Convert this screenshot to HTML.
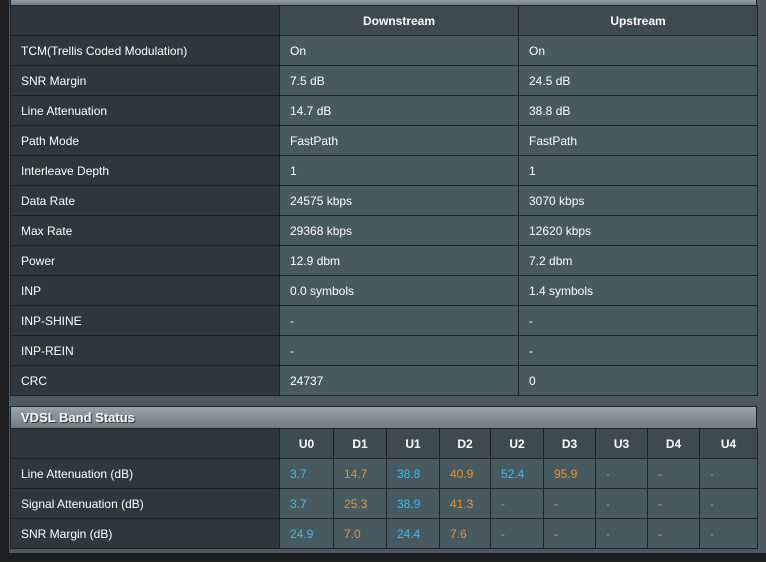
<!DOCTYPE html><html><head><style>
body{margin:0;width:766px;height:562px;background:#4d595e;font-family:"Liberation Sans",sans-serif;font-size:12px;color:#fff;position:relative;overflow:hidden}
.lstrip{position:absolute;left:0;top:0;width:9px;height:562px;background:#1c1f20}
.bstrip{position:absolute;left:0;top:553px;width:766px;height:9px;background:#1c1f20}
table{position:absolute;left:10px;border-collapse:collapse;table-layout:fixed}
td,th{border:1px solid #1e2326;height:29px;padding:0 0 0 10px;text-align:left;font-weight:normal}
th{background:#3c4b50;font-weight:bold;text-align:center;padding:0}
td.l{background:#2e383c}
th.l{background:#2e383c}
td{background:#475a60}
.bar{position:absolute;left:10px;width:747px;background:linear-gradient(#98a4ab,#6f7c82);border:1px solid #1e2326;box-sizing:border-box}
.b{color:#3fb6ee}.o{color:#f08d26}
</style></head><body>
<div class="lstrip"></div>
<div class="bar" style="top:-2px;height:8px"></div>
<table style="top:5px;width:748px">
<colgroup><col style="width:269px"><col style="width:239px"><col style="width:239px"></colgroup>
<tr><th class="l"></th><th>Downstream</th><th>Upstream</th></tr>
<tr><td class="l">TCM(Trellis Coded Modulation)</td><td>On</td><td>On</td></tr>
<tr><td class="l">SNR Margin</td><td>7.5 dB</td><td>24.5 dB</td></tr>
<tr><td class="l">Line Attenuation</td><td>14.7 dB</td><td>38.8 dB</td></tr>
<tr><td class="l">Path Mode</td><td>FastPath</td><td>FastPath</td></tr>
<tr><td class="l">Interleave Depth</td><td>1</td><td>1</td></tr>
<tr><td class="l">Data Rate</td><td>24575 kbps</td><td>3070 kbps</td></tr>
<tr><td class="l">Max Rate</td><td>29368 kbps</td><td>12620 kbps</td></tr>
<tr><td class="l">Power</td><td>12.9 dbm</td><td>7.2 dbm</td></tr>
<tr><td class="l">INP</td><td>0.0 symbols</td><td>1.4 symbols</td></tr>
<tr><td class="l">INP-SHINE</td><td>-</td><td>-</td></tr>
<tr><td class="l">INP-REIN</td><td>-</td><td>-</td></tr>
<tr><td class="l">CRC</td><td>24737</td><td>0</td></tr>
</table>
<div class="bar" style="top:406px;height:23px;font-weight:bold;font-size:13px;padding:3px 0 0 10px;text-shadow:1px 1px 0 #333">VDSL Band Status</div>
<table style="top:428px;width:748px">
<colgroup><col style="width:269px"><col style="width:54px"><col style="width:53px"><col style="width:53px"><col style="width:51px"><col style="width:53px"><col style="width:52px"><col style="width:52px"><col style="width:52px"><col style="width:58px"></colgroup>
<tr><th class="l"></th><th>U0</th><th>D1</th><th>U1</th><th>D2</th><th>U2</th><th>D3</th><th>U3</th><th>D4</th><th>U4</th></tr>
<tr><td class="l">Line Attenuation (dB)</td><td class="b">3.7</td><td class="o">14.7</td><td class="b">38.8</td><td class="o">40.9</td><td class="b">52.4</td><td class="o">95.9</td><td class="b">-</td><td class="o">-</td><td class="b">-</td></tr>
<tr><td class="l">Signal Attenuation (dB)</td><td class="b">3.7</td><td class="o">25.3</td><td class="b">38.9</td><td class="o">41.3</td><td class="b">-</td><td class="o">-</td><td class="b">-</td><td class="o">-</td><td class="b">-</td></tr>
<tr><td class="l">SNR Margin (dB)</td><td class="b">24.9</td><td class="o">7.0</td><td class="b">24.4</td><td class="o">7.6</td><td class="b">-</td><td class="o">-</td><td class="b">-</td><td class="o">-</td><td class="b">-</td></tr>
</table>
<div class="bstrip"></div>
</body></html>
